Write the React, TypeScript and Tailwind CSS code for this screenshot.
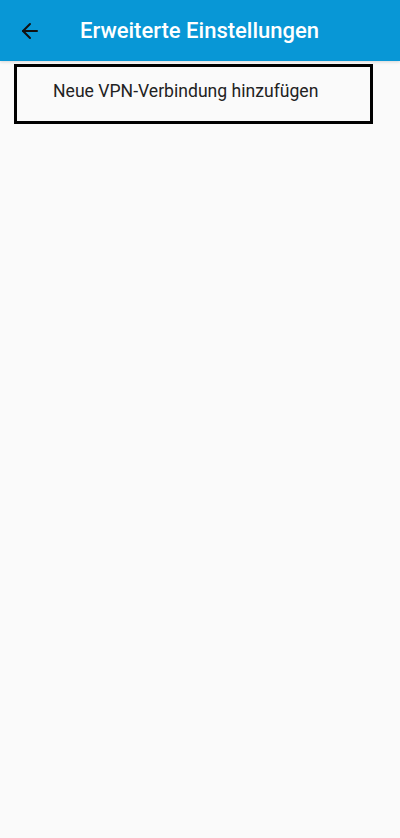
import { ArrowLeft } from 'lucide-react';

export default function App() {
  return (
    <div className="min-h-[838px] w-[400px] bg-[#fafafa]" style={{ fontFamily: 'Roboto, sans-serif' }}>
      <header className="flex h-[61px] items-center bg-[#0897d6] shadow-[0_1px_3px_rgba(0,0,0,0.15)]">
        <button className="ml-[18px] flex h-6 w-6 items-center justify-center text-[#111]">
          <ArrowLeft size={24} strokeWidth={2} />
        </button>
        <h1 className="ml-[38px] text-[22px] font-medium leading-none text-white">Erweiterte Einstellungen</h1>
      </header>
      <div className="ml-[14px] mt-[3px] flex h-[60px] w-[359px] items-center border-[3px] border-black pb-[5px]">
        <span className="ml-[36px] text-[17.6px] leading-none text-[#222]">Neue VPN-Verbindung hinzufügen</span>
      </div>
    </div>
  );
}
